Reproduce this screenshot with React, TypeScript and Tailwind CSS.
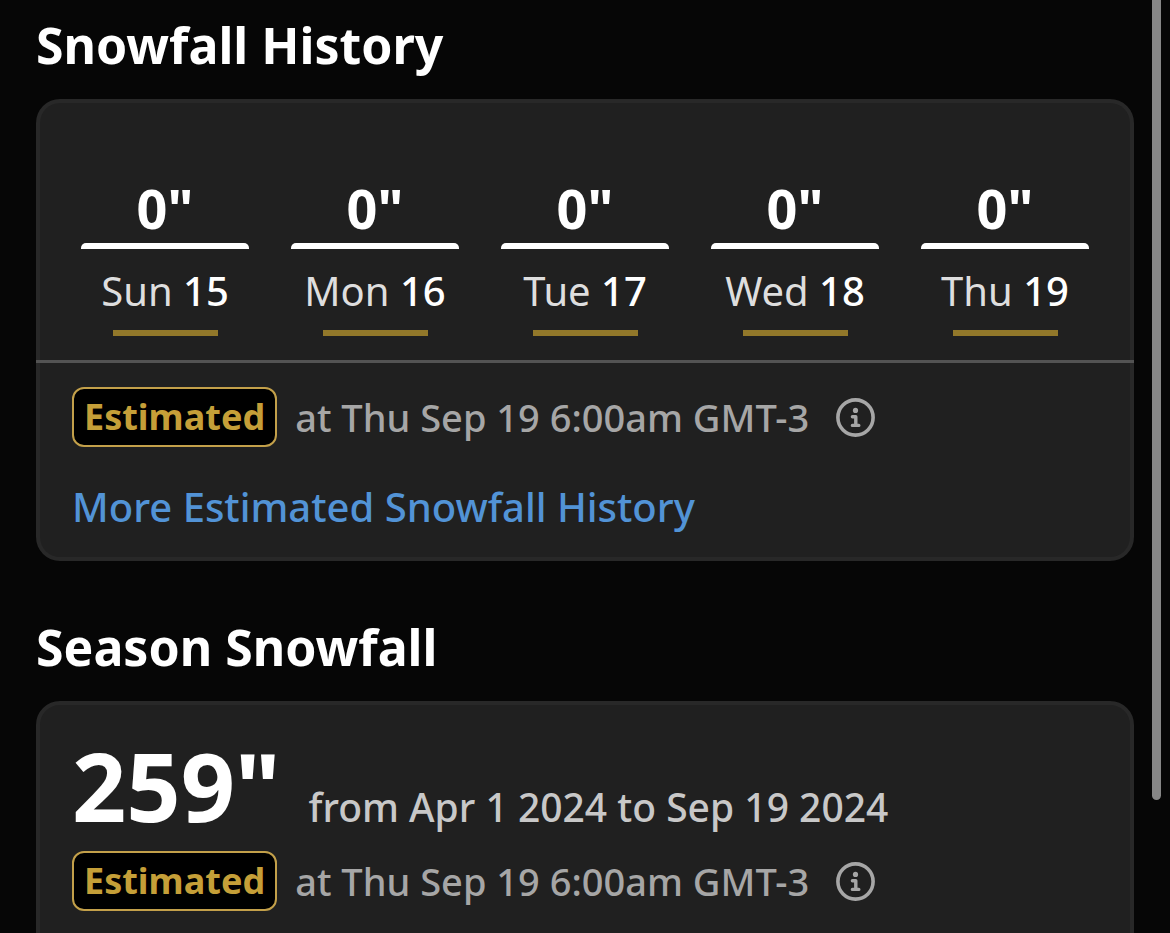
import React from "react";

interface IDaySnowfall {
  day: string;
  date: number;
  amount: number;
}

const history: IDaySnowfall[] = [
  { day: "Sun", date: 15, amount: 0 },
  { day: "Mon", date: 16, amount: 0 },
  { day: "Tue", date: 17, amount: 0 },
  { day: "Wed", date: 18, amount: 0 },
  { day: "Thu", date: 19, amount: 0 },
];

const InfoIcon: React.FC = () => (
  <svg viewBox="0 0 40 40" fill="none" stroke="currentColor" className="w-10 h-10">
    <circle cx="20.5" cy="20.5" r="17.6" strokeWidth="3.6" />
    <circle cx="20.5" cy="13.4" r="2.6" fill="currentColor" stroke="none" />
    <path
      d="M17.4 19.8h3.4v8M17.4 28.4h6.4"
      strokeWidth="3.4"
      strokeLinecap="round"
      strokeLinejoin="round"
    />
  </svg>
);

const DayColumn: React.FC<{ item: IDaySnowfall }> = ({ item }) => (
  <li className="flex flex-col items-center">
    <div className="text-[54px] leading-[60px] font-bold">{item.amount}"</div>
    <div className="mt-[5px] w-4/5 h-[6px] rounded-t-[5px] bg-white" />
    <div className="mt-4 text-[40px] leading-[52px] font-medium whitespace-nowrap">
      <span className="font-normal text-[#dedede]">{item.day}</span> {item.date}
    </div>
    <div className="mt-[13px] w-1/2 h-[6px] bg-[#92782a]" />
  </li>
);

const EstimatedRow: React.FC<{ time: string }> = ({ time }) => (
  <div className="flex items-center gap-[18px] text-[38px] leading-[56px] whitespace-nowrap">
    <span className="px-[10px] border-2 border-[#c3a04a] rounded-xl bg-black text-[36px] font-bold text-[#c59f38]">
      Estimated
    </span>
    <span className="font-medium text-[#a6a6a6]">at {time}</span>
    <button type="button" aria-label="About estimated snowfall" className="ml-2 text-[#a6a6a6]">
      <InfoIcon />
    </button>
  </div>
);

const App: React.FC = () => {
  return (
    <div className="relative h-screen overflow-hidden bg-[#060606] text-white font-['Noto_Sans',sans-serif]">
      <main className="px-9 pt-[11px]">
        <section>
          <h2 className="text-[50px] leading-[68px] font-bold">Snowfall History</h2>
          <div className="mt-5">
            <div className="px-5 pt-[75px] pb-6 border-4 border-b-0 border-[#282828] rounded-t-3xl bg-[#202020]">
              <ul className="grid grid-cols-5">
                {history.map((item) => (
                  <DayColumn key={`day-${item.date}`} item={item} />
                ))}
              </ul>
            </div>
            <hr className="h-[3px] border-0 bg-[#535353]" />
            <div className="px-8 pt-6 pb-[22px] border-4 border-t-0 border-[#282828] rounded-b-3xl bg-[#202020]">
              <EstimatedRow time="Thu Sep 19 6:00am GMT-3" />
              <a
                href="#history"
                className="mt-8 block text-[40px] leading-[56px] font-medium text-[#5293d6]"
              >
                More Estimated Snowfall History
              </a>
            </div>
          </div>
        </section>

        <section className="mt-[52px]">
          <h2 className="text-[50px] leading-[68px] font-bold">Season Snowfall</h2>
          <div className="mt-5 px-8 pt-7 pb-20 border-4 border-[#282828] rounded-3xl bg-[#202020]">
            <div className="flex items-baseline gap-7 whitespace-nowrap">
              <span className="text-[95px] leading-[104px] font-bold">259"</span>
              <span className="text-[39px] leading-[56px] font-medium text-[#c8c8c8]">
                from Apr 1 2024 to Sep 19 2024
              </span>
            </div>
            <div className="mt-[14px]">
              <EstimatedRow time="Thu Sep 19 6:00am GMT-3" />
            </div>
          </div>
        </section>
      </main>

      {/* scroll thumb */}
      <div className="absolute top-0 right-[9px] w-[9px] h-[800px] rounded-b-full bg-[#868686]" />
    </div>
  );
};

export default App;
